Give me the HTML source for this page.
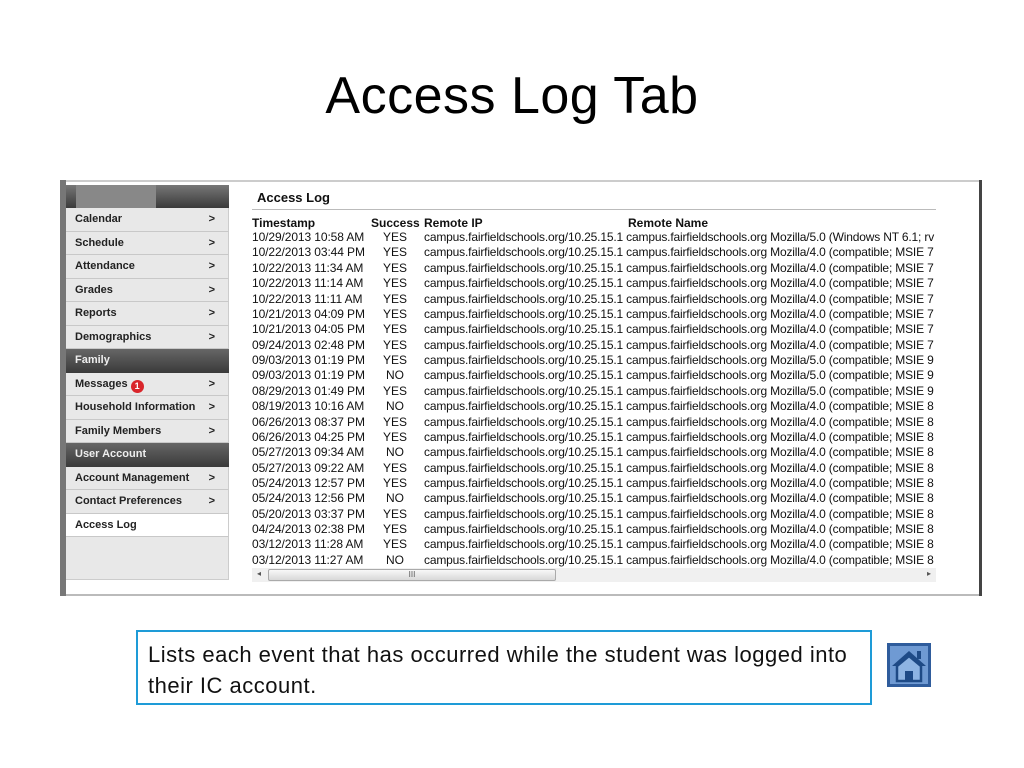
<!DOCTYPE html>
<html><head><meta charset="utf-8"><style>
body{margin:0;width:1024px;height:768px;background:#fff;position:relative;overflow:hidden;font-family:"Liberation Sans",Arial,sans-serif}
h1{position:absolute;top:66px;left:0;width:1024px;text-align:center;margin:0;font-weight:normal;font-size:52px;font-family:"Liberation Sans",sans-serif;color:#000;letter-spacing:0.5px}
.frame{position:absolute;left:60px;top:180px;width:922px;height:416px;border-top:2px solid #ccc;border-bottom:2px solid #bbb;box-sizing:border-box;background:#fff}
.lb{position:absolute;left:60px;top:180px;width:6px;height:416px;background:#777}
.rb{position:absolute;left:979px;top:180px;width:3px;height:416px;background:#444}
.side{position:absolute;left:66px;top:185px;width:163px}
.hd{height:23px;background:linear-gradient(#777,#3a3a3a)}
.it{height:22.5px;border-bottom:1px solid #c8c8c8;background:#e8e8e8;font-size:11px;font-weight:bold;color:#222;line-height:23px;padding-left:9px;position:relative;border-right:1px solid #ccc}
.it b{position:absolute;right:13px;top:0;font-weight:900}
.sec{height:23.5px;background:linear-gradient(#666,#3a3a3a);color:#eee;font-size:11px;font-weight:bold;line-height:23px;padding-left:9px}
.t{position:absolute;font-size:12px;color:#111;white-space:nowrap;line-height:15px}
.row{position:absolute;left:252px;width:684px;height:15px;overflow:hidden;font-size:12px;white-space:nowrap;color:#111;line-height:15px}
.row span{position:absolute;top:0}
.a{left:0;letter-spacing:-0.1px}.b{left:118px;width:50px;text-align:center}.c{left:172px;letter-spacing:-0.17px}
.note{position:absolute;left:136px;top:630px;width:736px;height:75px;border:2px solid #1e9bd7;box-sizing:border-box;font-family:"Liberation Sans",sans-serif;font-size:22px;line-height:31px;padding:7px 10px;color:#111;white-space:nowrap;letter-spacing:0.5px}
</style></head><body>
<h1>Access Log Tab</h1>
<div class="frame"></div><div class="lb"></div><div class="rb"></div>
<div class="side">
<div class="hd"><div style="width:80px;height:23px;background:#888;margin-left:10px"></div></div>
<div class="it">Calendar<b>&gt;</b></div>
<div class="it">Schedule<b>&gt;</b></div>
<div class="it">Attendance<b>&gt;</b></div>
<div class="it">Grades<b>&gt;</b></div>
<div class="it">Reports<b>&gt;</b></div>
<div class="it">Demographics<b>&gt;</b></div>
<div class="sec">Family</div>
<div class="it">Messages <span style="display:inline-block;width:13px;height:13px;border-radius:7px;background:#d9262b;color:#fff;font-size:9px;line-height:13px;text-align:center;vertical-align:-2px">1</span><b>&gt;</b></div>
<div class="it">Household Information<b>&gt;</b></div>
<div class="it">Family Members<b>&gt;</b></div>
<div class="sec">User Account</div>
<div class="it">Account Management<b>&gt;</b></div>
<div class="it">Contact Preferences<b>&gt;</b></div>
<div class="it" style="background:#fff">Access Log</div>
<div class="it" style="height:42px;border-bottom:1px solid #ccc"></div>
</div>
<div class="t" style="left:257px;top:190px;font-size:13px;font-weight:bold">Access Log</div>
<div style="position:absolute;left:252px;top:209px;width:684px;height:1px;background:#bbb"></div>
<div class="t" style="left:252px;top:216px;font-weight:bold">Timestamp</div>
<div class="t" style="left:371px;top:216px;font-weight:bold">Success</div>
<div class="t" style="left:424px;top:216px;font-weight:bold">Remote IP</div>
<div class="t" style="left:628px;top:216px;font-weight:bold">Remote Name</div>
<div class="row" style="top:230px"><span class="a">10/29/2013 10:58 AM</span><span class="b">YES</span><span class="c">campus.fairfieldschools.org/10.25.15.1 campus.fairfieldschools.org Mozilla/5.0 (Windows NT 6.1; rv</span></div>
<div class="row" style="top:245px"><span class="a">10/22/2013 03:44 PM</span><span class="b">YES</span><span class="c">campus.fairfieldschools.org/10.25.15.1 campus.fairfieldschools.org Mozilla/4.0 (compatible; MSIE 7</span></div>
<div class="row" style="top:261px"><span class="a">10/22/2013 11:34 AM</span><span class="b">YES</span><span class="c">campus.fairfieldschools.org/10.25.15.1 campus.fairfieldschools.org Mozilla/4.0 (compatible; MSIE 7</span></div>
<div class="row" style="top:276px"><span class="a">10/22/2013 11:14 AM</span><span class="b">YES</span><span class="c">campus.fairfieldschools.org/10.25.15.1 campus.fairfieldschools.org Mozilla/4.0 (compatible; MSIE 7</span></div>
<div class="row" style="top:292px"><span class="a">10/22/2013 11:11 AM</span><span class="b">YES</span><span class="c">campus.fairfieldschools.org/10.25.15.1 campus.fairfieldschools.org Mozilla/4.0 (compatible; MSIE 7</span></div>
<div class="row" style="top:307px"><span class="a">10/21/2013 04:09 PM</span><span class="b">YES</span><span class="c">campus.fairfieldschools.org/10.25.15.1 campus.fairfieldschools.org Mozilla/4.0 (compatible; MSIE 7</span></div>
<div class="row" style="top:322px"><span class="a">10/21/2013 04:05 PM</span><span class="b">YES</span><span class="c">campus.fairfieldschools.org/10.25.15.1 campus.fairfieldschools.org Mozilla/4.0 (compatible; MSIE 7</span></div>
<div class="row" style="top:338px"><span class="a">09/24/2013 02:48 PM</span><span class="b">YES</span><span class="c">campus.fairfieldschools.org/10.25.15.1 campus.fairfieldschools.org Mozilla/4.0 (compatible; MSIE 7</span></div>
<div class="row" style="top:353px"><span class="a">09/03/2013 01:19 PM</span><span class="b">YES</span><span class="c">campus.fairfieldschools.org/10.25.15.1 campus.fairfieldschools.org Mozilla/5.0 (compatible; MSIE 9</span></div>
<div class="row" style="top:368px"><span class="a">09/03/2013 01:19 PM</span><span class="b">NO</span><span class="c">campus.fairfieldschools.org/10.25.15.1 campus.fairfieldschools.org Mozilla/5.0 (compatible; MSIE 9</span></div>
<div class="row" style="top:384px"><span class="a">08/29/2013 01:49 PM</span><span class="b">YES</span><span class="c">campus.fairfieldschools.org/10.25.15.1 campus.fairfieldschools.org Mozilla/5.0 (compatible; MSIE 9</span></div>
<div class="row" style="top:399px"><span class="a">08/19/2013 10:16 AM</span><span class="b">NO</span><span class="c">campus.fairfieldschools.org/10.25.15.1 campus.fairfieldschools.org Mozilla/4.0 (compatible; MSIE 8</span></div>
<div class="row" style="top:415px"><span class="a">06/26/2013 08:37 PM</span><span class="b">YES</span><span class="c">campus.fairfieldschools.org/10.25.15.1 campus.fairfieldschools.org Mozilla/4.0 (compatible; MSIE 8</span></div>
<div class="row" style="top:430px"><span class="a">06/26/2013 04:25 PM</span><span class="b">YES</span><span class="c">campus.fairfieldschools.org/10.25.15.1 campus.fairfieldschools.org Mozilla/4.0 (compatible; MSIE 8</span></div>
<div class="row" style="top:445px"><span class="a">05/27/2013 09:34 AM</span><span class="b">NO</span><span class="c">campus.fairfieldschools.org/10.25.15.1 campus.fairfieldschools.org Mozilla/4.0 (compatible; MSIE 8</span></div>
<div class="row" style="top:461px"><span class="a">05/27/2013 09:22 AM</span><span class="b">YES</span><span class="c">campus.fairfieldschools.org/10.25.15.1 campus.fairfieldschools.org Mozilla/4.0 (compatible; MSIE 8</span></div>
<div class="row" style="top:476px"><span class="a">05/24/2013 12:57 PM</span><span class="b">YES</span><span class="c">campus.fairfieldschools.org/10.25.15.1 campus.fairfieldschools.org Mozilla/4.0 (compatible; MSIE 8</span></div>
<div class="row" style="top:491px"><span class="a">05/24/2013 12:56 PM</span><span class="b">NO</span><span class="c">campus.fairfieldschools.org/10.25.15.1 campus.fairfieldschools.org Mozilla/4.0 (compatible; MSIE 8</span></div>
<div class="row" style="top:507px"><span class="a">05/20/2013 03:37 PM</span><span class="b">YES</span><span class="c">campus.fairfieldschools.org/10.25.15.1 campus.fairfieldschools.org Mozilla/4.0 (compatible; MSIE 8</span></div>
<div class="row" style="top:522px"><span class="a">04/24/2013 02:38 PM</span><span class="b">YES</span><span class="c">campus.fairfieldschools.org/10.25.15.1 campus.fairfieldschools.org Mozilla/4.0 (compatible; MSIE 8</span></div>
<div class="row" style="top:537px"><span class="a">03/12/2013 11:28 AM</span><span class="b">YES</span><span class="c">campus.fairfieldschools.org/10.25.15.1 campus.fairfieldschools.org Mozilla/4.0 (compatible; MSIE 8</span></div>
<div class="row" style="top:553px"><span class="a">03/12/2013 11:27 AM</span><span class="b">NO</span><span class="c">campus.fairfieldschools.org/10.25.15.1 campus.fairfieldschools.org Mozilla/4.0 (compatible; MSIE 8</span></div>
<div style="position:absolute;left:252px;top:568px;width:684px;height:14px;background:#f0f0f0"></div>
<div style="position:absolute;left:268px;top:569px;width:288px;height:12px;background:linear-gradient(#f8f8f8,#d8d8d8);border:1px solid #aaa;border-radius:2px;box-sizing:border-box;font-size:8px;text-align:center;line-height:10px;color:#555">III</div>
<div style="position:absolute;left:257px;top:569px;font-size:8px;color:#555">◂</div>
<div style="position:absolute;left:927px;top:569px;font-size:8px;color:#555">▸</div>
<div class="note">Lists each event that has occurred while the student was logged into<br>their IC account.</div>
<svg style="position:absolute;left:886px;top:642px" width="46" height="46" viewBox="0 0 46 46">
<rect x="1" y="1" width="44" height="44" fill="#2f5c9c"/>
<rect x="4" y="4" width="38" height="38" fill="#6f9ad3"/>
<path d="M6 24 L23 9 L40 24 L35 24 L23 14 L11 24 Z" fill="#1e4a86"/>
<rect x="31" y="9" width="4" height="8" fill="#1e4a86"/>
<path d="M11 24 L23 14 L35 24 L35 39 L11 39 Z" fill="#8eb4e3" stroke="#1e4a86" stroke-width="2.5"/>
<rect x="19" y="29" width="8" height="10" fill="#1e4a86"/>
</svg>
</body></html>
